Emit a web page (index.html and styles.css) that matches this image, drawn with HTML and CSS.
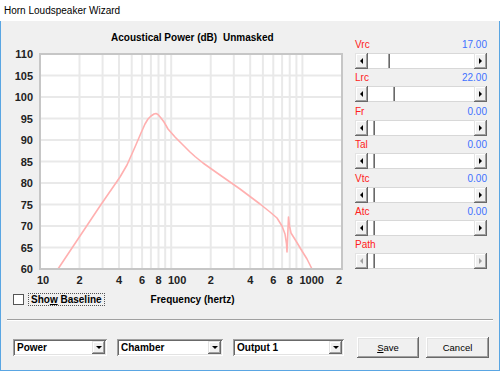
FILE: index.html
```html
<!DOCTYPE html>
<html>
<head>
<meta charset="utf-8">
<link rel="stylesheet" href="styles.css">
</head>
<body>
<div class="window">
  <div class="titlebar">Horn Loudspeaker Wizard</div>
  <div class="client">
    <div class="top">
      <div class="chart-col">
        <svg class="chart" width="349" height="265" viewBox="1 21 349 265">
          <text class="ctitle" x="111" y="41">Acoustical Power (dB)</text>
          <text class="ctitle" x="223" y="41">Unmasked</text>
          <g class="ylab">
            <text x="33" y="58">110</text>
            <text x="33" y="79.5">105</text>
            <text x="33" y="101">100</text>
            <text x="33" y="122.5">95</text>
            <text x="33" y="144">90</text>
            <text x="33" y="165.5">85</text>
            <text x="33" y="187">80</text>
            <text x="33" y="208.5">75</text>
            <text x="33" y="230">70</text>
            <text x="33" y="251.5">65</text>
            <text x="33" y="273">60</text>
          </g>
          <rect x="40" y="54" width="302" height="215" fill="#fff"/>
          <g class="grid">
            <line x1="40" y1="75.5" x2="342" y2="75.5"/>
            <line x1="40" y1="97" x2="342" y2="97"/>
            <line x1="40" y1="118.5" x2="342" y2="118.5"/>
            <line x1="40" y1="140" x2="342" y2="140"/>
            <line x1="40" y1="161.5" x2="342" y2="161.5"/>
            <line x1="40" y1="183" x2="342" y2="183"/>
            <line x1="40" y1="204.5" x2="342" y2="204.5"/>
            <line x1="40" y1="226" x2="342" y2="226"/>
            <line x1="40" y1="247.5" x2="342" y2="247.5"/>
            <line x1="79.5" y1="54" x2="79.5" y2="269"/>
            <line x1="102.6" y1="54" x2="102.6" y2="269"/>
            <line x1="119" y1="54" x2="119" y2="269"/>
            <line x1="131.7" y1="54" x2="131.7" y2="269"/>
            <line x1="142.1" y1="54" x2="142.1" y2="269"/>
            <line x1="150.9" y1="54" x2="150.9" y2="269"/>
            <line x1="158.5" y1="54" x2="158.5" y2="269"/>
            <line x1="165.2" y1="54" x2="165.2" y2="269"/>
            <line x1="171.2" y1="54" x2="171.2" y2="269"/>
            <line x1="210.7" y1="54" x2="210.7" y2="269"/>
            <line x1="233.8" y1="54" x2="233.8" y2="269"/>
            <line x1="250.2" y1="54" x2="250.2" y2="269"/>
            <line x1="262.9" y1="54" x2="262.9" y2="269"/>
            <line x1="273.3" y1="54" x2="273.3" y2="269"/>
            <line x1="282.1" y1="54" x2="282.1" y2="269"/>
            <line x1="289.7" y1="54" x2="289.7" y2="269"/>
            <line x1="296.4" y1="54" x2="296.4" y2="269"/>
            <line x1="302.4" y1="54" x2="302.4" y2="269"/>
          </g>
          <polyline class="curve" points="58,269 80,236 100,206 120,177 127,165 135,147 141,133 145,124 148,119 151,116 154,114 156,113.5 158,114.5 161,118 164,122 168,129 175,137 182,144 190,152 195,156.5 203,163 215,171.5 230,182 240,189 250,196.5 260,204 270,212 277,218 282,226 285,234 286.5,244 287,252 288.5,217 289.5,226 291,233 296,241 302,251 307,259 312,269"/>
          <rect class="frame" x="40" y="54" width="302" height="215"/>
          <g class="xlab">
            <text x="37" y="284">10</text>
            <text x="76.5" y="284">2</text>
            <text x="116" y="284">4</text>
            <text x="139" y="284">6</text>
            <text x="155.5" y="284">8</text>
            <text x="168" y="284">100</text>
            <text x="207.7" y="284">2</text>
            <text x="247.2" y="284">4</text>
            <text x="270.3" y="284">6</text>
            <text x="286.7" y="284">8</text>
            <text x="299.4" y="284">1000</text>
            <text x="336" y="284">2</text>
          </g>
        </svg>
        <div class="foot">
          <span class="checkbox"></span>
          <span class="focus">Sho<u>w</u> Baseline</span>
          <span class="xtitle">Frequency (hertz)</span>
        </div>
      </div>
      <div class="sliders">
        <div class="slider">
          <div class="slabel"><span class="name">Vrc</span><span class="val">17.00</span></div>
          <div class="sb"><span class="arr"><i class="tri-l"></i></span><span class="track"><span class="thumb" style="margin-left:15px"></span></span><span class="arr"><i class="tri-r"></i></span></div>
        </div>
        <div class="slider">
          <div class="slabel"><span class="name">Lrc</span><span class="val">22.00</span></div>
          <div class="sb"><span class="arr"><i class="tri-l"></i></span><span class="track"><span class="thumb" style="margin-left:20px"></span></span><span class="arr"><i class="tri-r"></i></span></div>
        </div>
        <div class="slider">
          <div class="slabel"><span class="name">Fr</span><span class="val">0.00</span></div>
          <div class="sb"><span class="arr"><i class="tri-l"></i></span><span class="track"><span class="thumb" style="margin-left:0px"></span></span><span class="arr"><i class="tri-r"></i></span></div>
        </div>
        <div class="slider">
          <div class="slabel"><span class="name">Tal</span><span class="val">0.00</span></div>
          <div class="sb"><span class="arr"><i class="tri-l"></i></span><span class="track"><span class="thumb" style="margin-left:0px"></span></span><span class="arr"><i class="tri-r"></i></span></div>
        </div>
        <div class="slider">
          <div class="slabel"><span class="name">Vtc</span><span class="val">0.00</span></div>
          <div class="sb"><span class="arr"><i class="tri-l"></i></span><span class="track"><span class="thumb" style="margin-left:0px"></span></span><span class="arr"><i class="tri-r"></i></span></div>
        </div>
        <div class="slider">
          <div class="slabel"><span class="name">Atc</span><span class="val">0.00</span></div>
          <div class="sb"><span class="arr"><i class="tri-l"></i></span><span class="track"><span class="thumb" style="margin-left:0px"></span></span><span class="arr"><i class="tri-r"></i></span></div>
        </div>
        <div class="slider disabled">
          <div class="slabel"><span class="name">Path</span><span class="val"></span></div>
          <div class="sb"><span class="arr"><i class="tri-l"></i></span><span class="track"><span class="thumb" style="margin-left:0px"></span></span><span class="arr"><i class="tri-r"></i></span></div>
        </div>
      </div>
    </div>
    <div class="sep"></div>
    <div class="controls">
      <div class="combo w-power"><span class="ctext">Power</span><span class="dbtn"><i class="tri-d"></i></span></div>
      <div class="combo w-chamber"><span class="ctext">Chamber</span><span class="dbtn"><i class="tri-d"></i></span></div>
      <div class="combo w-output"><span class="ctext">Output 1</span><span class="dbtn"><i class="tri-d"></i></span></div>
      <button class="btn btn-save"><u>S</u>ave</button>
      <button class="btn btn-cancel">Cancel</button>
    </div>
  </div>
</div>
</body>
</html>
```

FILE: styles.css
```css
* { box-sizing: border-box; }
body { margin: 0; background: #fff; font-family: "Liberation Sans", Arial, sans-serif; }

.window { width: 500px; height: 371px; display: flex; flex-direction: column; }

.titlebar {
  height: 21px; background: #fff; color: #000;
  font-family: "Liberation Sans", Arial, sans-serif;
  font-size: 10px; line-height: 22px; padding-left: 4px;
}

.client {
  flex: 1; background: #f0f0f0;
  border: 1px solid #5aa6e3; border-top: none;
  display: flex; flex-direction: column;
}

.top { display: flex; }
.chart-col { width: 349px; display: flex; flex-direction: column; }
.chart { display: block; }

.ctitle { font-family: "Liberation Sans", Arial, sans-serif; font-size: 10px; font-weight: bold; fill: #000; }
.ylab text { font-family: "Liberation Sans", Arial, sans-serif; font-size: 11px; font-weight: bold; fill: #222; text-anchor: end; }
.xlab text { font-family: "Liberation Sans", Arial, sans-serif; font-size: 11px; font-weight: bold; fill: #222; }
.grid line { stroke: #e9e9e9; stroke-width: 2; }
.frame { fill: none; stroke: #c6c6c6; stroke-width: 2; }
.curve { fill: none; stroke: #ffb0b0; stroke-width: 1.6; stroke-linejoin: round; }

.foot { height: 26px; display: flex; align-items: center; padding-left: 12px; }
.checkbox { width: 11px; height: 11px; background: #fff; border: 1px solid #555; }
.focus {
  margin-left: 4px; padding: 0 2px; height: 13px; line-height: 11px;
  border: 1px dotted #555; font-size: 10px; font-weight: bold; color: #000;
}
.xtitle { margin-left: 46px; font-size: 10px; font-weight: bold; color: #000; }

.sliders { margin-left: 5px; width: 132px; padding-top: 17px; display: flex; flex-direction: column; gap: 2.4px; }
.slider { display: flex; flex-direction: column; gap: 1px; }
.slabel { display: flex; justify-content: space-between; height: 14px; line-height: 14px; font-size: 10px; }
.name { color: #ff2020; }
.val { color: #4070ff; }

.sb { display: flex; height: 16px; width: 132px; }
.arr {
  width: 13px; height: 16px; background: #f0f0f0;
  display: flex; align-items: center; justify-content: center;
  box-shadow: inset -1px -1px #696969, inset 1px 1px #e3e3e3, inset -2px -2px #a0a0a0, inset 2px 2px #fff;
}
.track { flex: 1; display: flex; background: #fff; border-top: 1px solid #d8d8d8; border-bottom: 1px solid #d8d8d8; }
.thumb {
  width: 7px; height: 100%; background: #fff;
  box-shadow: inset -1px 0 #696969, inset -2px 0 #a0a0a0;
}
.tri-l { width: 0; height: 0; border-top: 3px solid transparent; border-bottom: 3px solid transparent; border-right: 3px solid #000; }
.tri-r { width: 0; height: 0; border-top: 3px solid transparent; border-bottom: 3px solid transparent; border-left: 3px solid #000; }
.disabled .tri-l { border-right-color: #a0a0a0; }
.disabled .tri-r { border-left-color: #a0a0a0; }

.sep { margin: 7px 6px 0; height: 2px; border-top: 1px solid #a0a0a0; border-bottom: 1px solid #fff; }

.controls { display: flex; align-items: center; height: 21px; margin-top: 16px; padding-left: 12px; }
.combo {
  height: 17px; background: #fff; display: flex; align-items: center; padding: 2px;
  box-shadow: inset 1px 1px #a0a0a0, inset -1px -1px #fff, inset 2px 2px #696969, inset -2px -2px #e3e3e3;
}
.ctext { flex: 1; font-size: 10px; font-weight: bold; color: #000; padding-left: 2px; }
.dbtn {
  width: 13px; height: 13px; background: #f0f0f0; display: flex; align-items: center; justify-content: center;
  box-shadow: inset -1px -1px #696969, inset 1px 1px #e3e3e3, inset -2px -2px #a0a0a0, inset 2px 2px #fff;
}
.tri-d { width: 0; height: 0; border-left: 3px solid transparent; border-right: 3px solid transparent; border-top: 3px solid #000; }
.w-power { width: 94px; }
.w-chamber { width: 106px; margin-left: 10px; }
.w-output { width: 111px; margin-left: 10px; }

.btn {
  height: 21px; background: #f0f0f0; border: none; padding: 0;
  font-family: "Liberation Sans", Arial, sans-serif; font-size: 9.5px; color: #000;
  box-shadow: inset -1px -1px #696969, inset 1px 1px #fff, inset -2px -2px #a0a0a0, inset 2px 2px #e3e3e3;
}
.btn-save { width: 62px; margin-left: 13px; }
.btn-cancel { width: 63px; margin-left: 7px; }
```
